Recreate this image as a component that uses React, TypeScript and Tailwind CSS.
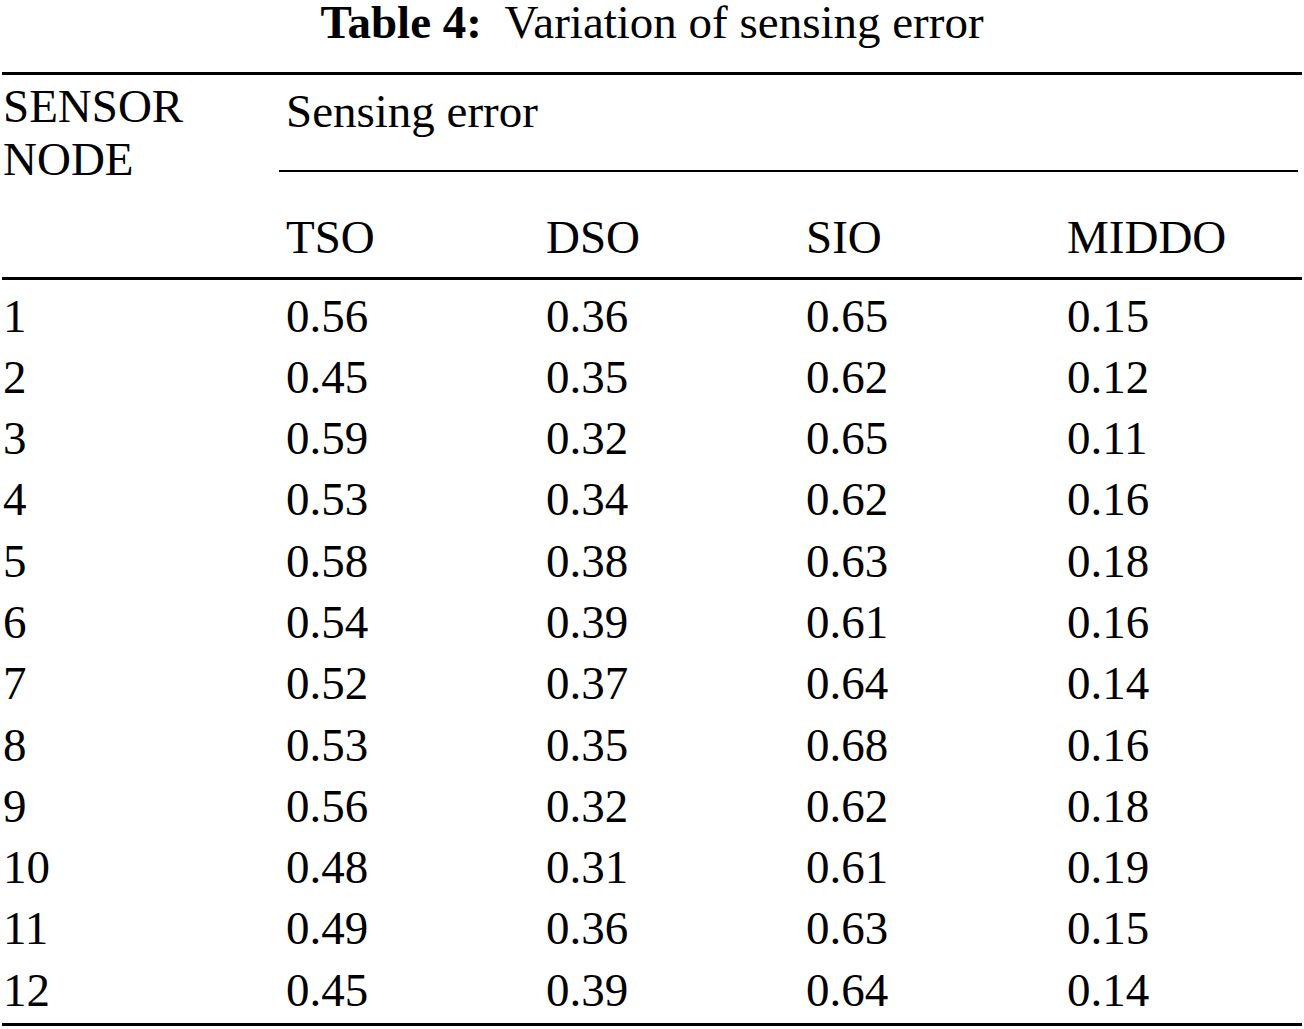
const rows = [
  ["1", "0.56", "0.36", "0.65", "0.15"],
  ["2", "0.45", "0.35", "0.62", "0.12"],
  ["3", "0.59", "0.32", "0.65", "0.11"],
  ["4", "0.53", "0.34", "0.62", "0.16"],
  ["5", "0.58", "0.38", "0.63", "0.18"],
  ["6", "0.54", "0.39", "0.61", "0.16"],
  ["7", "0.52", "0.37", "0.64", "0.14"],
  ["8", "0.53", "0.35", "0.68", "0.16"],
  ["9", "0.56", "0.32", "0.62", "0.18"],
  ["10", "0.48", "0.31", "0.61", "0.19"],
  ["11", "0.49", "0.36", "0.63", "0.15"],
  ["12", "0.45", "0.39", "0.64", "0.14"],
];

const cols = "grid grid-cols-[284px_260px_260px_261px_1fr]";

export default function App() {
  return (
    <div className="w-[1304px] h-[1029px] bg-white text-black text-[47px] font-['Liberation_Serif','Times_New_Roman',serif]">
      {/* Caption */}
      <div className="h-[72px] text-center leading-[44px] whitespace-pre">
        <span className="font-bold">Table 4:</span>
        {"  Variation of sensing error"}
      </div>

      <div className="ml-[2px] mr-[2px]">
        <div className="h-[3px] bg-black" />

        {/* Header */}
        <div className="flex h-[202px]">
          <div className="w-[277px] pt-[5px] pl-[1px] leading-[53px]">
            <div>SENSOR</div>
            <div>NODE</div>
          </div>
          <div className="flex-1 flex flex-col mr-[4px]">
            <div className="h-[97px] pt-[10px] pl-[7px] leading-[53px] border-b-[2.5px] border-black">
              Sensing error
            </div>
            <div className="grid grid-cols-[260px_260px_261px_1fr] pt-[39px] pl-[7px] leading-[53px]">
              <div>TSO</div>
              <div>DSO</div>
              <div>SIO</div>
              <div>MIDDO</div>
            </div>
          </div>
        </div>

        <div className="h-[3px] bg-black" />

        {/* Body */}
        <div className="pt-[5.5px] pb-[2.4px] leading-[61.3px]">
          {rows.map((r) => (
            <div key={r[0]} className={cols}>
              {r.map((c, i) => (
                <div key={i} className={i === 0 ? "pl-[1px]" : ""}>
                  {c}
                </div>
              ))}
            </div>
          ))}
        </div>

        <div className="h-[3px] bg-black" />
      </div>
    </div>
  );
}
